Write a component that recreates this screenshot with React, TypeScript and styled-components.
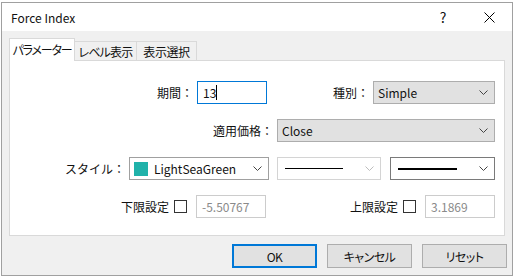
import React from 'react';
import styled, { createGlobalStyle } from 'styled-components';

const GlobalStyle = createGlobalStyle`
  body {
    margin: 0;
    background: #ffffff;
    font-family: "Noto Sans CJK JP", "Noto Sans", sans-serif;
    font-size: 12px;
    color: #111;
    font-feature-settings: "palt" 1;
  }
`;

const Window = styled.div`
  margin: 2px 0 0 1px;
  width: 512px;
  height: 274px;
  box-sizing: border-box;
  border: 1px solid #a0a0a0;
  background: #f0f0f0;
  display: flex;
  flex-direction: column;
`;

const TitleBar = styled.div`
  height: 28px;
  background: #ffffff;
  display: flex;
  align-items: center;
  padding-left: 9px;
`;

const Title = styled.div`
  flex: 1;
  font-size: 12px;
`;

const TitleButton = styled.div`
  width: 46px;
  height: 28px;
  display: flex;
  align-items: center;
  justify-content: center;
  font-size: 14px;
`;

const Content = styled.div`
  flex: 1;
  padding: 7px 5px 0 7px;
  display: flex;
  flex-direction: column;
`;

const TabBar = styled.div`
  display: flex;
  align-items: flex-end;
  height: 23px;
  margin-bottom: -1px;
  position: relative;
  z-index: 1;
`;

const Tab = styled.div<{ $active?: boolean; $width: number; $tight?: number }>`
  width: ${p => p.$width}px;
  height: ${p => (p.$active ? 23 : 20)}px;
  box-sizing: border-box;
  border: 1px solid #d9d9d9;
  border-bottom: ${p => (p.$active ? 'none' : '1px solid #d9d9d9')};
  border-left: ${p => (p.$active ? '1px solid #d9d9d9' : 'none')};
  background: ${p => (p.$active ? '#ffffff' : '#f0f0f0')};
  display: flex;
  align-items: center;
  justify-content: center;
  padding-bottom: ${p => (p.$active ? 2 : 0)}px;
  letter-spacing: ${p => p.$tight ?? 0}px;
  white-space: nowrap;
`;

const Panel = styled.div`
  width: 496px;
  height: 176px;
  box-sizing: border-box;
  border: 1px solid #d9d9d9;
  background: #ffffff;
  padding: 20px 9px 0 0;
  display: flex;
  flex-direction: column;
  gap: 15px;
`;

const Row = styled.div`
  display: flex;
  justify-content: flex-end;
  align-items: center;
  height: 23px;
`;

const Group = styled.div<{ $gap?: number }>`
  display: flex;
  align-items: center;
  margin-left: ${p => p.$gap ?? 0}px;
`;

const Label = styled.span`
  margin-right: 4px;
  white-space: nowrap;
  font-feature-settings: normal;
`;

const Field = styled.div<{ $focused?: boolean; $disabled?: boolean }>`
  width: 70px;
  height: 23px;
  box-sizing: border-box;
  border: 1px solid ${p => (p.$focused ? '#0078d7' : '#cccccc')};
  background: #ffffff;
  color: ${p => (p.$disabled ? '#8a8a8a' : '#111')};
  padding-left: 5px;
  display: flex;
  align-items: center;
`;

const Caret = styled.span`
  display: inline-block;
  width: 1px;
  height: 15px;
  background: #000;
`;

const Select = styled.div<{ $width: number; $variant: 'button' | 'white' | 'disabled' | 'dark' }>`
  width: ${p => p.$width}px;
  height: 23px;
  box-sizing: border-box;
  border: 1px solid
    ${p =>
      p.$variant === 'button'
        ? '#adadad'
        : p.$variant === 'disabled'
        ? '#d4d4d4'
        : p.$variant === 'dark'
        ? '#7a7a7a'
        : '#a0a0a0'};
  background: ${p => (p.$variant === 'button' ? '#e1e1e1' : '#ffffff')};
  display: flex;
  align-items: center;
  padding: 0 6px 0 4px;
  gap: 6px;
`;

const SelectText = styled.span`
  flex: 1;
  white-space: nowrap;
`;

const Swatch = styled.span<{ $color: string }>`
  width: 14px;
  height: 14px;
  background: ${p => p.$color};
  flex: none;
`;

const LineSample = styled.span<{ $thick: number }>`
  flex: 1;
  height: ${p => p.$thick}px;
  background: #000;
  margin: 0 16px 0 3px;
`;

const CheckBox = styled.span`
  width: 13px;
  height: 13px;
  box-sizing: border-box;
  border: 1px solid #333;
  background: #fff;
  margin: 0 9px 0 1px;
`;

const ButtonBar = styled.div`
  display: flex;
  justify-content: flex-end;
  gap: 10px;
  margin-top: 8px;
`;

const Button = styled.div<{ $default?: boolean }>`
  width: 85px;
  height: 24px;
  box-sizing: border-box;
  border: ${p => (p.$default ? '2px solid #0078d7' : '1px solid #adadad')};
  background: #e1e1e1;
  display: flex;
  align-items: center;
  justify-content: center;
  letter-spacing: -0.5px;
`;

const Chevron = ({ color = '#444' }: { color?: string }) => (
  <svg width="9" height="5" viewBox="0 0 9 5">
    <path d="M0.5 0.5 L4.5 4.5 L8.5 0.5" fill="none" stroke={color} strokeWidth="1" />
  </svg>
);

const CloseIcon = () => (
  <svg width="11" height="11" viewBox="0 0 11 11">
    <path d="M0.5 0.5 L10.5 10.5 M10.5 0.5 L0.5 10.5" stroke="#000" strokeWidth="1" />
  </svg>
);

export default function App() {
  return (
    <>
      <GlobalStyle />
      <Window>
        <TitleBar>
          <Title>Force Index</Title>
          <TitleButton>?</TitleButton>
          <TitleButton>
            <CloseIcon />
          </TitleButton>
        </TitleBar>
        <Content>
          <TabBar>
            <Tab $active $width={66} $tight={-1.2}>パラメーター</Tab>
            <Tab $width={62} $tight={-0.8}>レベル表示</Tab>
            <Tab $width={60} $tight={-0.4}>表示選択</Tab>
          </TabBar>
          <Panel>
            <Row>
              <Group>
                <Label>期間：</Label>
                <Field $focused>
                  13
                  <Caret />
                </Field>
              </Group>
              <Group $gap={66}>
                <Label>種別：</Label>
                <Select $width={122} $variant="button">
                  <SelectText>Simple</SelectText>
                  <Chevron />
                </Select>
              </Group>
            </Row>
            <Row>
              <Label>適用価格：</Label>
              <Select $width={218} $variant="button">
                <SelectText>Close</SelectText>
                <Chevron />
              </Select>
            </Row>
            <Row>
              <Label>スタイル：</Label>
              <Select $width={140} $variant="white">
                <Swatch $color="#20b2aa" />
                <SelectText>LightSeaGreen</SelectText>
                <Chevron />
              </Select>
              <Group $gap={8}>
                <Select $width={104} $variant="disabled">
                  <LineSample $thick={1} />
                  <Chevron color="#bdbdbd" />
                </Select>
              </Group>
              <Group $gap={9}>
                <Select $width={105} $variant="dark">
                  <LineSample $thick={2} />
                  <Chevron />
                </Select>
              </Group>
            </Row>
            <Row>
              <Group>
                <Label>下限設定</Label>
                <CheckBox />
                <Field $disabled>-5.50767</Field>
              </Group>
              <Group $gap={84}>
                <Label>上限設定</Label>
                <CheckBox />
                <Field $disabled>3.1869</Field>
              </Group>
            </Row>
          </Panel>
          <ButtonBar>
            <Button $default>OK</Button>
            <Button>キャンセル</Button>
            <Button>リセット</Button>
          </ButtonBar>
        </Content>
      </Window>
    </>
  );
}
